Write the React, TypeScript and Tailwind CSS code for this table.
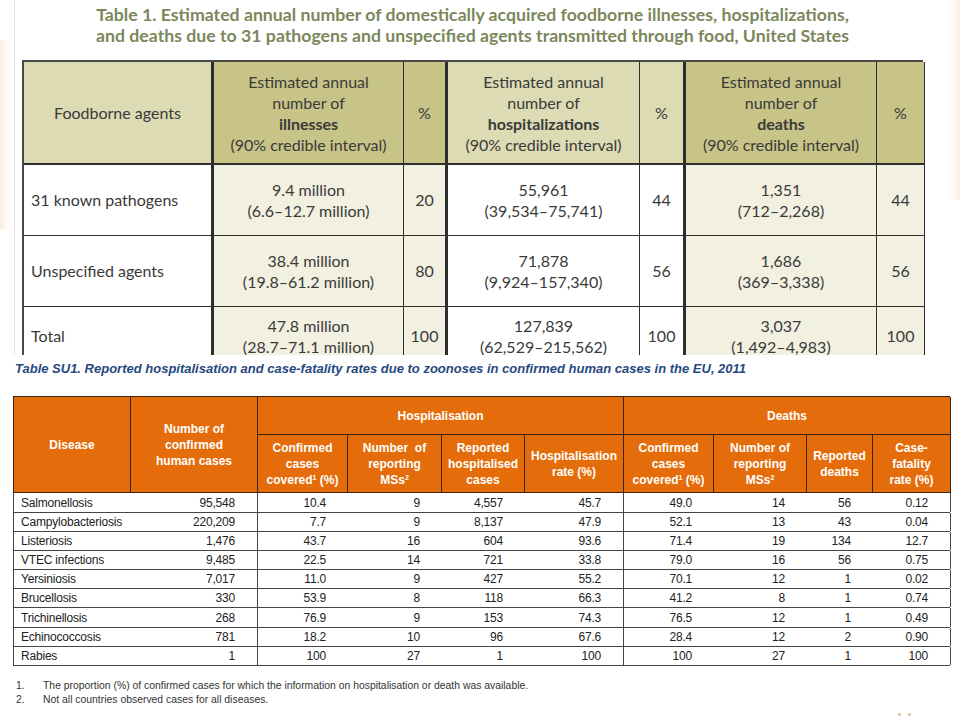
import React from 'react'

const t1Rows = [
  { agent: '31 known pathogens', ill: ['9.4 million', '(6.6–12.7 million)'], illPct: '20', hosp: ['55,961', '(39,534–75,741)'], hospPct: '44', death: ['1,351', '(712–2,268)'], deathPct: '44', h: 'h-[71px]' },
  { agent: 'Unspecified agents', ill: ['38.4 million', '(19.8–61.2 million)'], illPct: '80', hosp: ['71,878', '(9,924–157,340)'], hospPct: '56', death: ['1,686', '(369–3,338)'], deathPct: '56', h: 'h-[71px]' },
  { agent: 'Total', ill: ['47.8 million', '(28.7–71.1 million)'], illPct: '100', hosp: ['127,839', '(62,529–215,562)'], hospPct: '100', death: ['3,037', '(1,492–4,983)'], deathPct: '100', h: 'h-[58px]' },
]

const t2Rows = [
  { name: 'Salmonellosis', v: ['95,548', '10.4', '9', '4,557', '45.7', '49.0', '14', '56', '0.12'], h: 'h-[20px]' },
  { name: 'Campylobacteriosis', v: ['220,209', '7.7', '9', '8,137', '47.9', '52.1', '13', '43', '0.04'], h: 'h-[19px]' },
  { name: 'Listeriosis', v: ['1,476', '43.7', '16', '604', '93.6', '71.4', '19', '134', '12.7'], h: 'h-[19px]' },
  { name: 'VTEC infections', v: ['9,485', '22.5', '14', '721', '33.8', '79.0', '16', '56', '0.75'], h: 'h-[19px]' },
  { name: 'Yersiniosis', v: ['7,017', '11.0', '9', '427', '55.2', '70.1', '12', '1', '0.02'], h: 'h-[19px]' },
  { name: 'Brucellosis', v: ['330', '53.9', '8', '118', '66.3', '41.2', '8', '1', '0.74'], h: 'h-[19px]' },
  { name: 'Trichinellosis', v: ['268', '76.9', '9', '153', '74.3', '76.5', '12', '1', '0.49'], h: 'h-[20px]' },
  { name: 'Echinococcosis', v: ['781', '18.2', '10', '96', '67.6', '28.4', '12', '2', '0.90'], h: 'h-[19px]' },
  { name: 'Rabies', v: ['1', '100', '27', '1', '100', '100', '27', '1', '100'], h: 'h-[19px]' },
]

const t2Cols = 'grid grid-cols-[117px_127px_90px_94px_83px_99px_90px_93px_66px_78px]'
const t1Cols = 'grid grid-cols-[190px_190px_44px_192px_46px_191px_48px]'

function Two({ lines }: { lines: string[] }) {
  return (
    <div className="flex flex-col items-center leading-[21px]">
      <span>{lines[0]}</span>
      <span>{lines[1]}</span>
    </div>
  )
}

function UsTable() {
  const cell = 'flex items-center justify-center text-center border-b border-r border-[#2e2e2e]'
  const light = 'bg-[#dddbb4]'
  const dark = 'bg-[#c8c387]'
  const cream = 'bg-[#f1f0e1]'
  return (
    <div className="w-[901px] border-l-2 border-t-2 border-[#4a4a4a] text-[16px] text-[#3a3a3a] font-['Lato','Open_Sans',sans-serif]">
      <div className={`${t1Cols} h-[103px]`}>
        <div className={`${cell} ${light} border-r-[3px] border-b-2`}>Foodborne agents</div>
        <div className={`${cell} ${dark} border-b-2 leading-[21px] flex-col`}>
          <span>Estimated annual</span>
          <span>number of</span>
          <span className="font-bold">illnesses</span>
          <span>(90% credible interval)</span>
        </div>
        <div className={`${cell} ${dark} border-r-[3px] border-b-2`}>%</div>
        <div className={`${cell} ${light} border-b-2 leading-[21px] flex-col`}>
          <span>Estimated annual</span>
          <span>number of</span>
          <span className="font-bold">hospitalizations</span>
          <span>(90% credible interval)</span>
        </div>
        <div className={`${cell} ${light} border-r-[3px] border-b-2`}>%</div>
        <div className={`${cell} ${dark} border-b-2 leading-[21px] flex-col`}>
          <span>Estimated annual</span>
          <span>number of</span>
          <span className="font-bold">deaths</span>
          <span>(90% credible interval)</span>
        </div>
        <div className={`${cell} ${dark} border-b-2`}>%</div>
      </div>
      {t1Rows.map(r => (
        <div key={r.agent} className={`${t1Cols} ${r.h}`}>
          <div className={`${cell} bg-white border-r-[3px] !justify-start pl-[7px]`}>{r.agent}</div>
          <div className={`${cell} ${cream}`}><Two lines={r.ill} /></div>
          <div className={`${cell} ${cream} border-r-[3px]`}>{r.illPct}</div>
          <div className={`${cell} bg-white`}><Two lines={r.hosp} /></div>
          <div className={`${cell} bg-white border-r-[3px]`}>{r.hospPct}</div>
          <div className={`${cell} ${cream}`}><Two lines={r.death} /></div>
          <div className={`${cell} ${cream}`}>{r.deathPct}</div>
        </div>
      ))}
    </div>
  )
}

function EuTable() {
  const hc = 'flex flex-col items-center justify-center text-center border-r border-b border-[#3a2414] leading-[16px]'
  const bodyBorder = ['border-r-0', 'border-r border-[#444]', 'border-r-0', 'border-r-0', 'border-r-0', 'border-r border-[#444]', 'border-r-0', 'border-r-0', 'border-r-0', 'border-r border-[#444]']
  return (
    <div className="w-[937px] font-['Liberation_Sans',Arial,sans-serif]">
      <div className={`${t2Cols} grid-rows-[38px_58px] bg-[#e46c0a] text-white font-bold text-[12px] border-l border-t border-[#3a2414]`}>
        <div className={`${hc} row-span-2`}>Disease</div>
        <div className={`${hc} row-span-2`}>
          <span>Number of</span>
          <span>confirmed</span>
          <span>human cases</span>
        </div>
        <div className={`${hc} col-span-4`}>Hospitalisation</div>
        <div className={`${hc} col-span-4`}>Deaths</div>
        <div className={hc}>
          <span>Confirmed</span>
          <span>cases</span>
          <span>covered<sup className="text-[7px]">1</sup> (%)</span>
        </div>
        <div className={hc}>
          <span>Number&nbsp; of</span>
          <span>reporting</span>
          <span>MSs<sup className="text-[7px]">2</sup></span>
        </div>
        <div className={hc}>
          <span>Reported</span>
          <span>hospitalised</span>
          <span>cases</span>
        </div>
        <div className={hc}>
          <span>Hospitalisation</span>
          <span>rate (%)</span>
        </div>
        <div className={hc}>
          <span>Confirmed</span>
          <span>cases</span>
          <span>covered<sup className="text-[7px]">1</sup> (%)</span>
        </div>
        <div className={hc}>
          <span>Number of</span>
          <span>reporting</span>
          <span>MSs<sup className="text-[7px]">2</sup></span>
        </div>
        <div className={hc}>
          <span>Reported</span>
          <span>deaths</span>
        </div>
        <div className={hc}>
          <span>Case-</span>
          <span>fatality</span>
          <span>rate (%)</span>
        </div>
      </div>
      <div className="border-l border-[#444] text-[12px] text-[#222] tracking-[-0.2px]">
        {t2Rows.map(r => (
          <div key={r.name} className={`${t2Cols} ${r.h} border-b border-[#444]`}>
            <div className={`flex items-center pl-[7px] ${bodyBorder[0]}`}>{r.name}</div>
            {r.v.map((v, i) => (
              <div key={i} className={`flex items-center justify-end pr-[22px] ${bodyBorder[i + 1]}`}>{v}</div>
            ))}
          </div>
        ))}
      </div>
    </div>
  )
}

export default function App() {
  return (
    <div className="w-[960px] h-[720px] bg-white overflow-hidden">
      <section className="h-[355px] overflow-hidden flex">
        <div className="w-[14px] shrink-0 flex flex-col">
          <div className="h-[40px]" />
          <div className="h-[190px] w-[10px] bg-gradient-to-r from-[#f8efe0] to-white" />
        </div>
        <div className="border-l border-[#e4e4e4] pl-[7px] flex flex-col">
          <h2 className="w-[901px] pt-[4px] text-center text-[17.7px] leading-[21px] font-bold text-[#7c875b] font-['Lato','Open_Sans',sans-serif] whitespace-nowrap">
            Table 1. Estimated annual number of domestically acquired foodborne illnesses, hospitalizations,
            <br />
            and deaths due to 31 pathogens and unspecified agents transmitted through food, United States
          </h2>
          <div className="mt-[14px]">
            <UsTable />
          </div>
        </div>
        <div className="flex-1" />
        <div className="w-[12px] h-[200px] bg-gradient-to-l from-[#fbf1e2] to-white" />
      </section>
      <section className="pl-[13px]">
        <p className="mt-[6px] pl-[2px] text-[13px] leading-[16px] font-bold italic text-[#27497f] font-['Liberation_Sans',Arial,sans-serif]">
          Table SU1. Reported hospitalisation and case-fatality rates due to zoonoses in confirmed human cases in the EU, 2011
        </p>
        <div className="mt-[19px]">
          <EuTable />
        </div>
        <div className="mt-[13px] text-[10.4px] leading-[14px] text-[#333] font-['Liberation_Sans',Arial,sans-serif]">
          <div className="flex">
            <span className="w-[30px] pl-[3px]">1.</span>
            <span>The proportion (%) of confirmed cases for which the information on hospitalisation or death was available.</span>
          </div>
          <div className="flex">
            <span className="w-[30px] pl-[3px]">2.</span>
            <span>Not all countries observed cases for all diseases.</span>
          </div>
        </div>
        <div className="mt-[6px] ml-[885px] flex gap-[7px]">
          <span className="w-[3px] h-[3px] bg-[#e2cfa4]" />
          <span className="w-[3px] h-[3px] bg-[#e2cfa4]" />
        </div>
      </section>
    </div>
  )
}
